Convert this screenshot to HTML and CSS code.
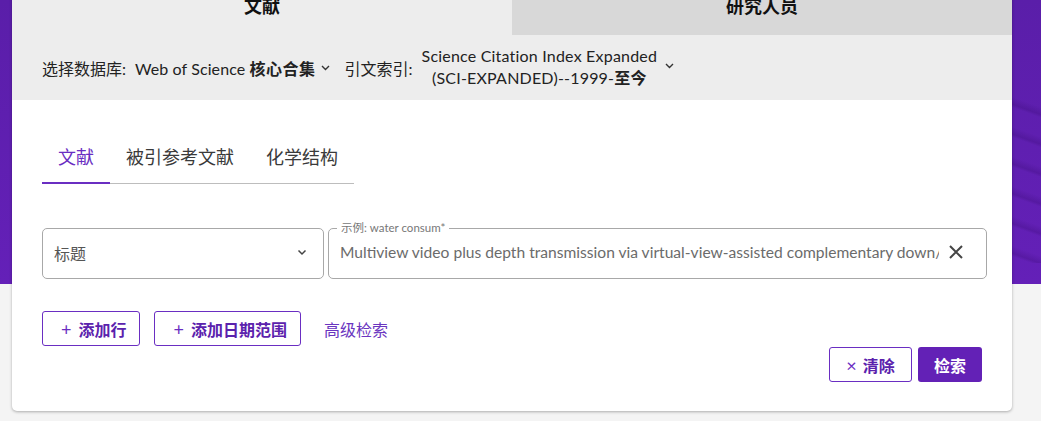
FILE: index.html
```html
<!DOCTYPE html>
<html lang="zh">
<head>
<meta charset="utf-8">
<link rel="stylesheet" href="styles.css">
</head>
<body>
<div class="card">
  <div class="top-tabs">
    <div class="top-tab active">文献</div>
    <div class="top-tab">研究人员</div>
  </div>
  <div class="db-bar">
    <span class="db-label">选择数据库:</span>
    <span class="db-value">Web of Science <b>核心合集</b></span>
    <svg class="chev-s" width="9" height="6" viewBox="0 0 9 6"><path d="M1 1l3.5 3.5L8 1" fill="none" stroke="#333" stroke-width="1.4"/></svg>
    <span class="idx-label">引文索引:</span>
    <span class="idx-value">Science Citation Index Expanded<br>(SCI-EXPANDED)--1999-<b>至今</b></span>
    <svg class="chev-s" width="9" height="6" viewBox="0 0 9 6"><path d="M1 1l3.5 3.5L8 1" fill="none" stroke="#333" stroke-width="1.4"/></svg>
  </div>
  <div class="body">
    <div class="sub-tabs">
      <div class="sub-tab active">文献</div>
      <div class="sub-tab">被引参考文献</div>
      <div class="sub-tab">化学结构</div>
    </div>
    <div class="field-row">
      <div class="select">
        <span>标题</span>
        <svg width="10" height="7" viewBox="0 0 10 7"><path d="M1.5 1.5L5 5l3.5-3.5" fill="none" stroke="#444" stroke-width="1.5"/></svg>
      </div>
      <div class="input">
        <span class="legend">示例: water consum*</span>
        <span class="value">Multiview video plus depth transmission via virtual-view-assisted complementary down/upsampling</span>
        <svg class="clear" width="16" height="16" viewBox="0 0 16 16"><path d="M2 2L14 14M14 2L2 14" stroke="#454545" stroke-width="2"/></svg>
      </div>
    </div>
    <div class="btn-row">
      <button class="btn-outline"><span class="plus">+</span>添加行</button>
      <button class="btn-outline"><span class="plus">+</span>添加日期范围</button>
      <a class="link">高级检索</a>
    </div>
    <div class="action-row">
      <button class="btn-outline btn-clear"><span class="times">×</span>清除</button>
      <button class="btn-solid">检索</button>
    </div>
  </div>
</div>
</body>
</html>
```
FILE: styles.css
```css
html, body {
  margin: 0;
  padding: 0;
}
body {
  width: 1041px;
  height: 421px;
  overflow: hidden;
  font-family: "Lato", "Noto Sans CJK SC", sans-serif;
  color: #333;
  background:
    linear-gradient(to bottom, transparent 0, transparent 284px, #f4f4f4 284px),
    repeating-linear-gradient(200deg, rgba(0,0,0,0) 0px, rgba(0,0,0,0) 18px, rgba(40,0,90,0.2) 25px, rgba(0,0,0,0) 28px) right 88px / 29px 175px no-repeat,
    linear-gradient(to bottom, #5a1ea9 0, #6420b8 284px);
}
.card {
  width: 1000px;
  margin: -20px 0 0 12px;
  height: 431px;
  background: #fff;
  border-radius: 0 0 5px 5px;
  box-shadow: 0 1px 3px rgba(0,0,0,0.3);
  overflow: hidden;
}
.top-tabs {
  display: grid;
  grid-template-columns: 500px 500px;
  height: 55px;
}
.top-tab {
  display: flex;
  align-items: center;
  justify-content: center;
  padding-bottom: 5px;
  box-sizing: border-box;
  font-size: 18px;
  font-weight: 700;
  color: #111;
  background: #d8d8d8;
}
.top-tab.active { background: #ededed; }
.db-bar {
  height: 65px;
  background: #ededed;
  display: flex;
  align-items: center;
  padding-left: 30px;
  font-size: 16px;
  color: #222;
}
.db-label { margin-right: 9px; }
.db-value { letter-spacing: 0.1px; }
.db-value b { font-weight: 700; letter-spacing: 0.5px; }
.chev-s { margin-left: 5px; margin-top: 1px; }
.idx-label { margin-left: 15px; margin-right: 9px; }
.idx-value {
  text-align: center;
  line-height: 22px;
  margin-top: -2px;
  letter-spacing: 0.2px;
}
.idx-value + .chev-s { margin-left: 8px; margin-top: -4px; }
.body {
  padding: 32px 30px 0 30px;
}
.sub-tabs {
  display: flex;
  width: 312px;
  border-bottom: 1px solid #bdbdbd;
}
.sub-tab {
  height: 50px;
  line-height: 50px;
  padding: 0 16px;
  font-size: 18px;
  color: #3a3a3a;
  margin-bottom: -1px;
  border-bottom: 2px solid transparent;
}
.sub-tab.active {
  color: #6a2ec2;
  border-bottom-color: #6a2ec2;
}
.field-row {
  display: flex;
  gap: 4px;
  margin-top: 44px;
  margin-right: -5px;
}
.select {
  flex: none;
  width: 282px;
  height: 51px;
  box-sizing: border-box;
  border: 1px solid #a8a8a8;
  border-radius: 5px;
  display: flex;
  align-items: center;
  justify-content: space-between;
  padding: 0 16px 2px 11px;
  font-size: 16px;
  color: #555;
}
.input {
  flex: none;
  position: relative;
  width: 659px;
  height: 51px;
  box-sizing: border-box;
  border: 1px solid #a8a8a8;
  border-radius: 5px;
  display: flex;
  align-items: center;
  padding: 0 22px 0 11px;
  gap: 9px;
}
.legend {
  position: absolute;
  left: 8px;
  top: -7px;
  padding: 0 4px;
  background: #fff;
  font-size: 11.5px;
  line-height: 12px;
  color: #777;
}
.value {
  flex: 1;
  white-space: nowrap;
  overflow: hidden;
  font-size: 15.6px;
  color: #6b6b6b;
  margin-top: -4px;
}
.clear { margin-top: -3px; flex: none; }
.btn-row {
  display: flex;
  align-items: center;
  margin-top: 32px;
}
button {
  font-family: inherit;
  cursor: pointer;
}
.btn-outline {
  height: 35px;
  box-sizing: border-box;
  border: 1px solid #6a2ec2;
  border-radius: 3px;
  background: #fff;
  color: #5b22ad;
  font-size: 16px;
  font-weight: 700;
  padding: 0 13px 0 18px;
  display: flex;
  align-items: center;
}
.btn-row .btn-outline + .btn-outline { margin-left: 14px; }
.plus {
  font-weight: 400;
  font-size: 18px;
  margin-right: 7px;
  color: #6a2ec2;
}
.link {
  margin-left: 23px;
  font-size: 16px;
  color: #6a35c0;
}
.action-row {
  display: flex;
  justify-content: flex-end;
  gap: 6px;
  margin-top: 1px;
}
.btn-clear {
  width: 83px;
  justify-content: center;
  padding: 0;
}
.times {
  font-weight: 400;
  font-size: 18px;
  margin-right: 6px;
  color: #6a2ec2;
}
.btn-solid {
  width: 64px;
  height: 35px;
  border: none;
  border-radius: 3px;
  background: #6321b6;
  color: #fff;
  font-size: 16px;
  font-weight: 700;
}
```
